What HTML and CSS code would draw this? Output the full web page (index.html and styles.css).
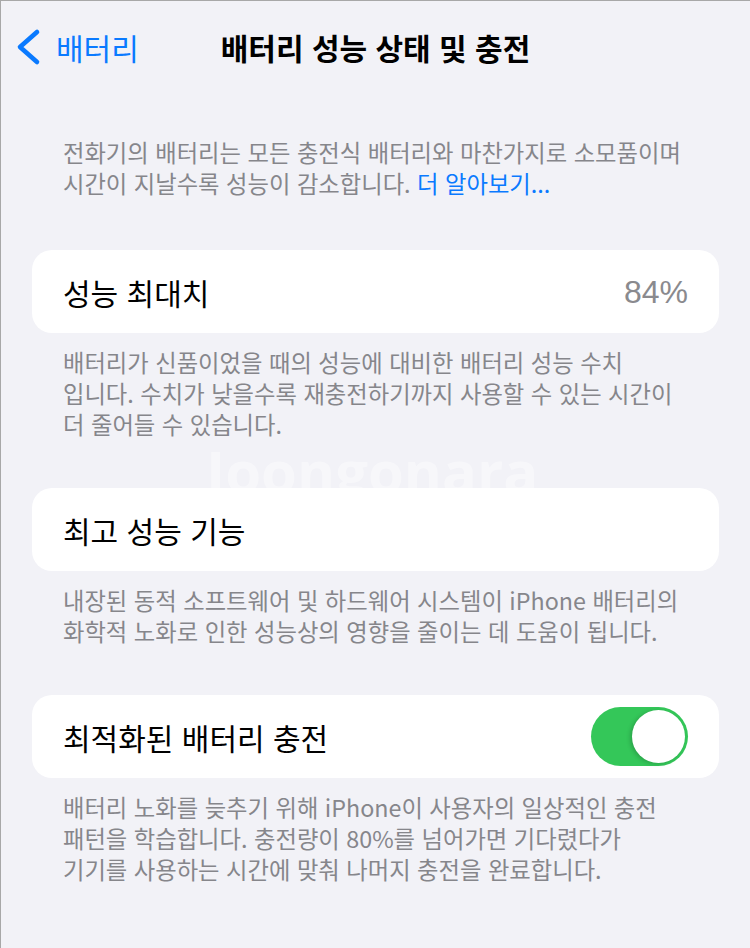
FILE: index.html
```html
<!DOCTYPE html>
<html lang="ko">
<head>
<meta charset="utf-8">
<title>배터리 성능 상태 및 충전</title>
<link rel="stylesheet" href="styles.css">
</head>
<body>
<div class="screen">
  <header class="nav">
    <a class="back" href="#">
      <svg class="chevron" width="26" height="38" viewBox="0 0 26 38" aria-hidden="true">
        <path d="M22 4 L5 19 L22 34" fill="none" stroke="currentColor" stroke-width="4.6" stroke-linecap="round" stroke-linejoin="round"/>
      </svg>
      <span>배터리</span>
    </a>
    <h1 class="title">배터리 성능 상태 및 충전</h1>
    <span class="nav-spacer"></span>
  </header>

  <main class="content">
    <p class="intro">전화기의 배터리는 모든 충전식 배터리와 마찬가지로 소모품이며<br>시간이 지날수록 성능이 감소합니다. <a class="link" href="#">더 알아보기...</a></p>

    <section class="group">
      <div class="card">
        <span class="label">성능 최대치</span>
        <span class="value">84%</span>
      </div>
      <p class="footnote">배터리가 신품이었을 때의 성능에 대비한 배터리 성능 수치<br>입니다. 수치가 낮을수록 재충전하기까지 사용할 수 있는 시간이<br>더 줄어들 수 있습니다.</p>
    </section>

    <section class="group">
      <div class="card">
        <span class="label">최고 성능 기능</span>
      </div>
      <p class="footnote">내장된 동적 소프트웨어 및 하드웨어 시스템이 iPhone 배터리의<br>화학적 노화로 인한 성능상의 영향을 줄이는 데 도움이 됩니다.</p>
    </section>

    <section class="group">
      <div class="card">
        <span class="label">최적화된 배터리 충전</span>
        <span class="switch" role="switch" aria-checked="true"><span class="knob"></span></span>
      </div>
      <p class="footnote">배터리 노화를 늦추기 위해 iPhone이 사용자의 일상적인 충전<br>패턴을 학습합니다. 충전량이 80%를 넘어가면 기다렸다가<br>기기를 사용하는 시간에 맞춰 나머지 충전을 완료합니다.</p>
    </section>
  </main>

  <div class="watermark" aria-hidden="true">Joongonara</div>
</div>
</body>
</html>
```
FILE: styles.css
```css
html, body {
  margin: 0;
  padding: 0;
  background: #f2f2f7;
}

.screen {
  position: relative;
  width: 750px;
  height: 948px;
  box-sizing: border-box;
  border-top: 1px solid #a8a8a8;
  border-left: 1px solid #a8a8a8;
  background: #f2f2f7;
  overflow: hidden;
  font-family: "Noto Sans CJK KR", "Noto Sans", sans-serif;
}

/* Navigation bar */
.nav {
  display: grid;
  grid-template-columns: 1fr auto 1fr;
  align-items: center;
  height: 91px;
}

.back {
  display: flex;
  align-items: center;
  gap: 15px;
  padding-left: 14px;
  color: #0a7aff;
  font-size: 30px;
  line-height: 38px;
  text-decoration: none;
}

.chevron {
  display: block;
  flex: none;
}

.title {
  margin: 0;
  font-size: 30px;
  line-height: 40px;
  font-weight: 700;
  color: #000;
  white-space: nowrap;
}

/* Content */
.intro {
  margin: 45px 0 0;
  padding: 0 30px 3px 62px;
  font-size: 23.3px;
  line-height: 31px;
  color: #86868b;
  white-space: nowrap;
}

.link {
  color: #0a7aff;
  text-decoration: none;
}

.group {
  margin-top: 48px;
}

.card {
  display: flex;
  align-items: center;
  justify-content: space-between;
  height: 83px;
  margin: 0 31px;
  padding: 0 31px;
  background: #ffffff;
  border-radius: 20px;
}

.label {
  font-size: 30px;
  line-height: 40px;
  color: #000;
}

.value {
  font-family: "Liberation Sans", Arial, sans-serif;
  font-size: 32px;
  line-height: 40px;
  color: #8a8a8e;
}

.footnote {
  margin: 0;
  padding: 14px 30px 0 62px;
  font-size: 23.3px;
  line-height: 31px;
  color: #86868b;
  white-space: nowrap;
}

/* Toggle switch */
.switch {
  display: flex;
  justify-content: flex-end;
  align-items: center;
  width: 97px;
  height: 59px;
  padding: 3px;
  box-sizing: border-box;
  border-radius: 30px;
  background: #34c759;
}

.knob {
  width: 53px;
  height: 53px;
  border-radius: 50%;
  background: #ffffff;
  box-shadow: -2px 1px 4px rgba(0, 0, 0, 0.18);
}

/* Faint watermark overlay */
.watermark {
  position: absolute;
  left: 205px;
  top: 441px;
  font-family: "Open Sans", "DejaVu Sans", sans-serif;
  font-weight: 700;
  font-size: 58px;
  line-height: 1;
  color: rgba(255, 255, 255, 0.4);
  pointer-events: none;
}
```
